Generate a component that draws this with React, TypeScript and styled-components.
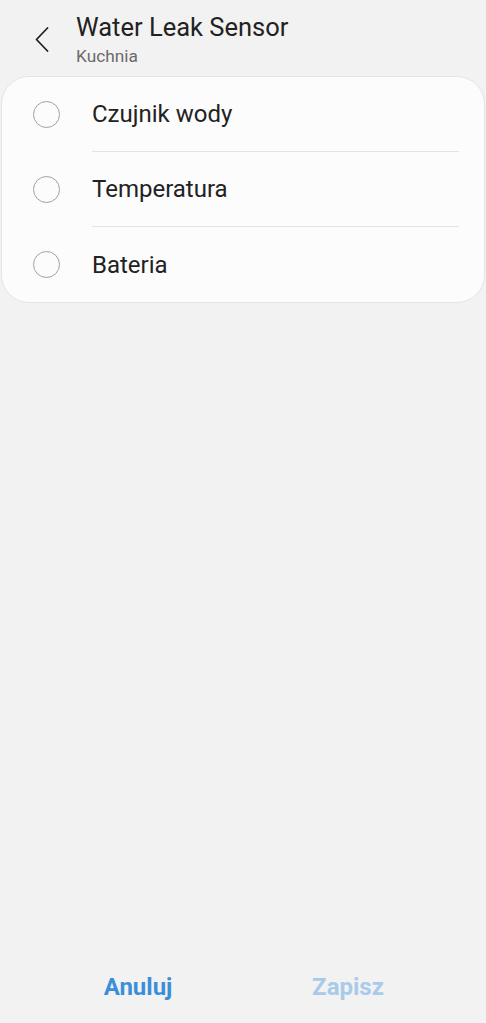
import React from "react"
import styled, { createGlobalStyle } from "styled-components"

const GlobalStyle = createGlobalStyle`
  html, body {
    margin: 0;
    padding: 0;
    background: #f2f2f2;
    font-family: Roboto, "Noto Sans", "Liberation Sans", sans-serif;
  }
`

const Screen = styled.div`
  display: flex;
  flex-direction: column;
  height: 1023px;
  background: #f2f2f2;
`

const Header = styled.header`
  display: flex;
  align-items: flex-start;
  height: 76px;
  box-sizing: border-box;
  padding-top: 12px;
`

const BackButton = styled.button`
  display: flex;
  align-items: center;
  justify-content: center;
  width: 24px;
  height: 26px;
  margin: 14px 0 0 30px;
  padding: 0;
  border: none;
  background: none;
  color: #222;
`

const TitleBlock = styled.div`
  display: flex;
  flex-direction: column;
  margin-left: 22px;
`

const Title = styled.h1`
  margin: 0;
  font-size: 25.5px;
  line-height: 30px;
  font-weight: 400;
  color: #222;
`

const Subtitle = styled.div`
  margin-top: 4px;
  font-size: 17.3px;
  line-height: 20px;
  color: #6b6b6b;
`

const Card = styled.ul`
  list-style: none;
  margin: 0 1px;
  padding: 0;
  background: #fcfcfc;
  border: 1px solid #e4e4e4;
  border-radius: 28px;
  overflow: hidden;
`

const Row = styled.li`
  display: flex;
  align-items: stretch;
  height: 75px;
  padding-left: 31px;
`

const Radio = styled.span`
  align-self: center;
  width: 27px;
  height: 27px;
  box-sizing: border-box;
  border: 1.5px solid #a0a0a0;
  border-radius: 50%;
  flex-shrink: 0;
`

const Label = styled.span<{ $divider: boolean }>`
  flex: 1;
  display: flex;
  align-items: center;
  margin: 0 25px 0 32px;
  font-size: 24px;
  color: #222;
  border-bottom: ${p => (p.$divider ? "1px solid #e3e3e3" : "none")};
`

const Spacer = styled.div`
  flex: 1;
`

const Footer = styled.footer`
  display: flex;
  height: 72px;
  padding: 0 33px;
`

const FooterButton = styled.button<{ $disabled?: boolean }>`
  flex: 1;
  border: none;
  background: none;
  font-family: inherit;
  font-size: 24px;
  font-weight: 700;
  color: ${p => (p.$disabled ? "#a9cbea" : "#3b8fd9")};
`

const items = ["Czujnik wody", "Temperatura", "Bateria"]

export default function App() {
  return (
    <Screen>
      <GlobalStyle />
      <Header>
        <BackButton aria-label="Wstecz">
          <svg width="14" height="25" viewBox="0 0 14 25" fill="none">
            <path d="M12.5 1 L1.5 12.5 L12.5 24" stroke="currentColor" strokeWidth="1.8" strokeLinecap="round" strokeLinejoin="round" />
          </svg>
        </BackButton>
        <TitleBlock>
          <Title>Water Leak Sensor</Title>
          <Subtitle>Kuchnia</Subtitle>
        </TitleBlock>
      </Header>
      <Card>
        {items.map((item, i) => (
          <Row key={item}>
            <Radio />
            <Label $divider={i < items.length - 1}>{item}</Label>
          </Row>
        ))}
      </Card>
      <Spacer />
      <Footer>
        <FooterButton>Anuluj</FooterButton>
        <FooterButton $disabled>Zapisz</FooterButton>
      </Footer>
    </Screen>
  )
}
